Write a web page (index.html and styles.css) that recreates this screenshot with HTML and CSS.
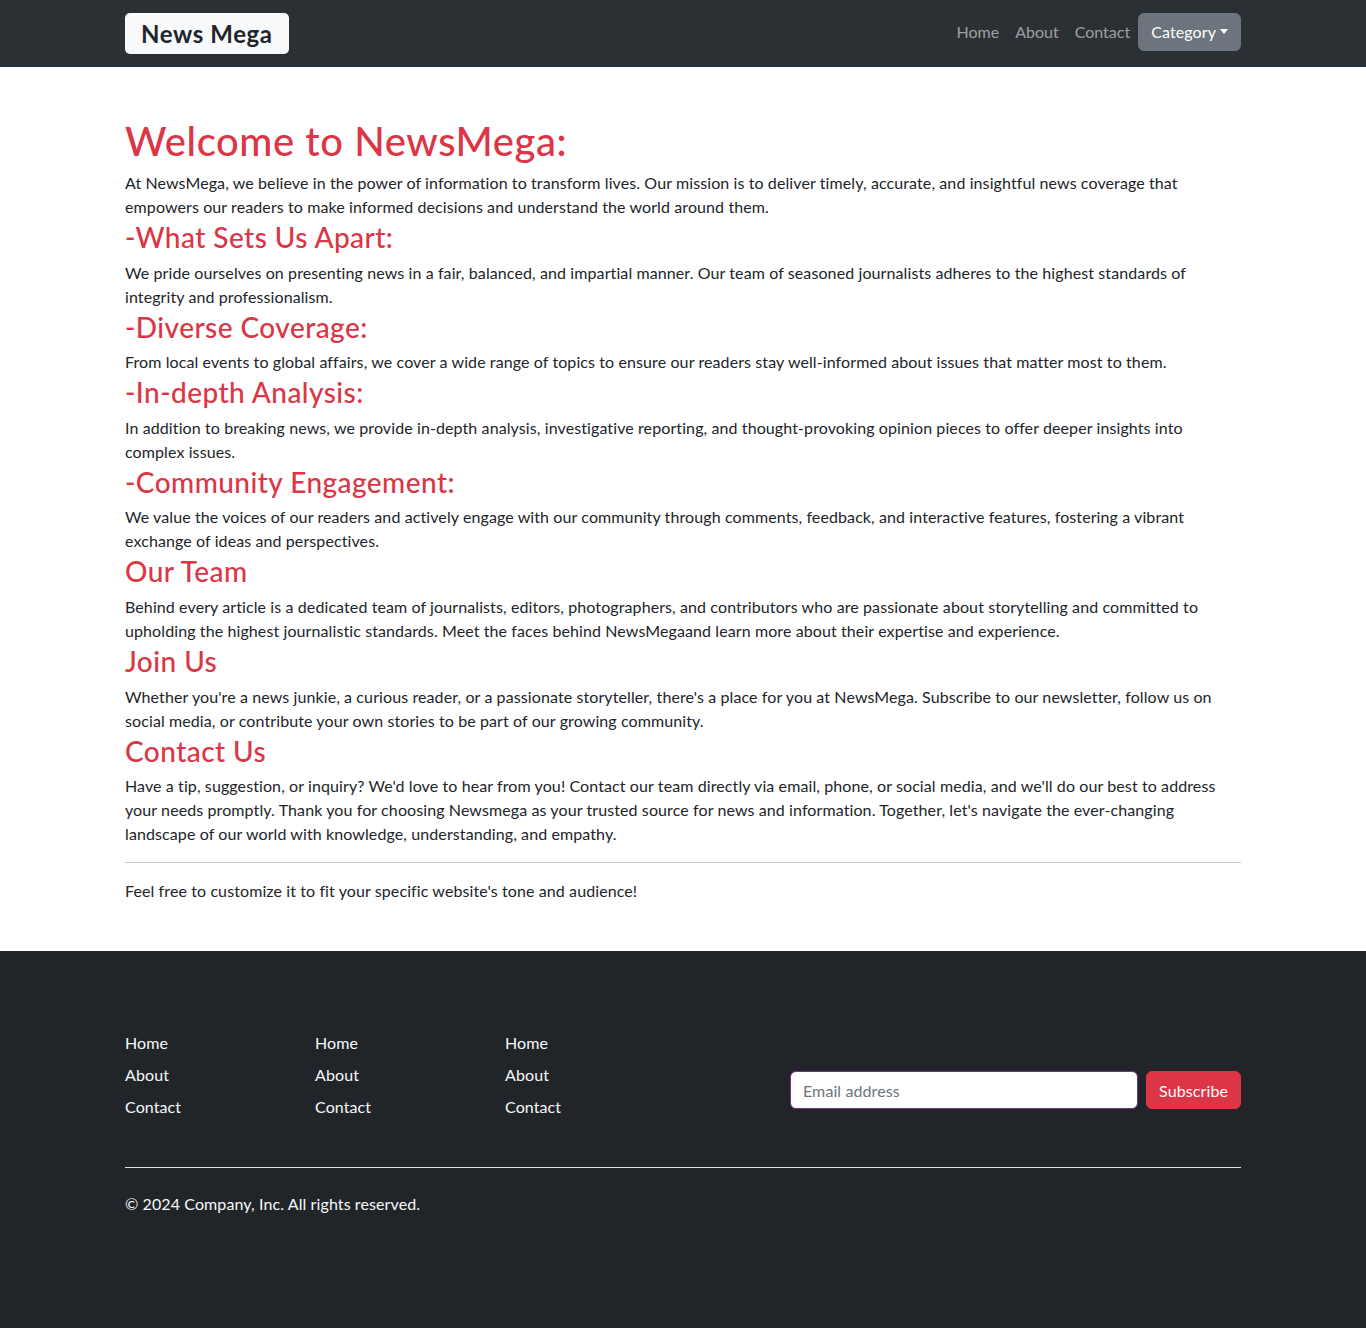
FILE: index.html
```html
<!DOCTYPE html>
<html lang="en">
<head>
<meta charset="utf-8">
<title>News Mega - About</title>
<link rel="stylesheet" href="styles.css">
</head>
<body>
<header class="navbar">
  <div class="container nav-inner">
    <a class="brand" href="#">News Mega</a>
    <ul class="nav-links">
      <li><a class="nav-link" href="#">Home</a></li>
      <li><a class="nav-link" href="#">About</a></li>
      <li><a class="nav-link" href="#">Contact</a></li>
      <li><button class="category-btn" type="button">Category<span class="caret"></span></button></li>
    </ul>
  </div>
</header>

<main class="container main">
  <h1 class="title">Welcome to NewsMega:</h1>
  <p>At NewsMega, we believe in the power of information to transform lives. Our mission is to deliver timely, accurate, and insightful news coverage that empowers our readers to make informed decisions and understand the world around them.</p>
  <h3 class="sub">-What Sets Us Apart:</h3>
  <p>We pride ourselves on presenting news in a fair, balanced, and impartial manner. Our team of seasoned journalists adheres to the highest standards of integrity and professionalism.</p>
  <h3 class="sub">-Diverse Coverage:</h3>
  <p>From local events to global affairs, we cover a wide range of topics to ensure our readers stay well-informed about issues that matter most to them.</p>
  <h3 class="sub">-In-depth Analysis:</h3>
  <p>In addition to breaking news, we provide in-depth analysis, investigative reporting, and thought-provoking opinion pieces to offer deeper insights into complex issues.</p>
  <h3 class="sub">-Community Engagement:</h3>
  <p>We value the voices of our readers and actively engage with our community through comments, feedback, and interactive features, fostering a vibrant exchange of ideas and perspectives.</p>
  <h3 class="sub">Our Team</h3>
  <p>Behind every article is a dedicated team of journalists, editors, photographers, and contributors who are passionate about storytelling and committed to upholding the highest journalistic standards. Meet the faces behind NewsMegaand learn more about their expertise and experience.</p>
  <h3 class="sub">Join Us</h3>
  <p>Whether you're a news junkie, a curious reader, or a passionate storyteller, there's a place for you at NewsMega. Subscribe to our newsletter, follow us on social media, or contribute your own stories to be part of our growing community.</p>
  <h3 class="sub">Contact Us</h3>
  <p>Have a tip, suggestion, or inquiry? We'd love to hear from you! Contact our team directly via email, phone, or social media, and we'll do our best to address your needs promptly. Thank you for choosing Newsmega as your trusted source for news and information. Together, let's navigate the ever-changing landscape of our world with knowledge, understanding, and empathy.</p>
  <hr class="divider">
  <p>Feel free to customize it to fit your specific website's tone and audience!</p>
</main>

<footer class="footer">
  <div class="container">
    <div class="footer-row">
      <ul class="footer-col">
        <li><a href="#">Home</a></li>
        <li><a href="#">About</a></li>
        <li><a href="#">Contact</a></li>
      </ul>
      <ul class="footer-col">
        <li><a href="#">Home</a></li>
        <li><a href="#">About</a></li>
        <li><a href="#">Contact</a></li>
      </ul>
      <ul class="footer-col">
        <li><a href="#">Home</a></li>
        <li><a href="#">About</a></li>
        <li><a href="#">Contact</a></li>
      </ul>
      <form class="subscribe">
        <input class="email" type="text" placeholder="Email address">
        <button class="subscribe-btn" type="button">Subscribe</button>
      </form>
    </div>
    <div class="copyright">
      <p>© 2024 Company, Inc. All rights reserved.</p>
    </div>
  </div>
</footer>
</body>
</html>
```

FILE: styles.css
```css
* { box-sizing: border-box; }
html, body { margin: 0; padding: 0; }
body {
  font-family: "Lato", "Liberation Sans", sans-serif;
  font-size: 16px;
  line-height: 24px;
  letter-spacing: 0.1px;
  color: #212529;
  background: #fff;
}
a { text-decoration: none; }
ul { list-style: none; margin: 0; padding: 0; }

.container {
  width: 1116px;
  margin: 0 auto;
}

/* Navbar */
.navbar {
  background: #2b3035;
  height: 67px;
}
.nav-inner {
  height: 67px;
  display: flex;
  align-items: center;
  justify-content: space-between;
}
.brand {
  display: inline-block;
  background: #f8f9fa;
  color: #212529;
  font-weight: 700;
  font-size: 24px;
  letter-spacing: 0.6px;
  line-height: 42px;
  height: 41px;
  padding: 0 16px;
  border-radius: 5px;
}
.nav-links {
  display: flex;
  align-items: center;
  margin-top: -3px;
}
.nav-link {
  display: block;
  padding: 8px 8px;
  letter-spacing: 0;
  color: rgba(255, 255, 255, 0.55);
}
.category-btn {
  font-family: inherit;
  font-size: 16px;
  letter-spacing: 0.1px;
  line-height: 24px;
  color: #fff;
  background: #6c757d;
  border: 1px solid #6c757d;
  border-radius: 6px;
  padding: 6px 12px;
  height: 38px;
  display: flex;
  align-items: center;
}
.caret {
  display: inline-block;
  margin-left: 4px;
  width: 0;
  height: 0;
  border-top: 5px solid #fff;
  border-left: 4px solid transparent;
  border-right: 4px solid transparent;
  margin-top: -2px;
}

/* Main */
.main {
  padding: 48px 0;
}
.main p { margin: 0; }
.title {
  margin: 0 0 6px;
  padding-top: 2px;
  font-size: 40px;
  line-height: 48px;
  font-weight: 500;
  letter-spacing: 0.55px;
  color: #dc3545;
}
.sub {
  margin: 0 0 6px;
  padding-top: 2px;
  font-size: 28px;
  line-height: 33.6px;
  font-weight: 500;
  letter-spacing: 0.45px;
  color: #dc3545;
}
.divider {
  margin: 16px 0;
  border: 0;
  border-top: 1px solid #c8c9ca;
}

/* Footer */
.footer {
  background: #212529;
  color: #f8f9fa;
  padding: 80px 0 88px;
}
.footer-row {
  display: flex;
}
.footer-col {
  width: 190px;
  padding-bottom: 16px;
}
.footer-col li { margin-bottom: 8px; }
.footer-col a { color: #f8f9fa; }
.subscribe {
  margin-left: 95px;
  width: 451px;
  display: flex;
  gap: 8px;
  padding-top: 40px;
  align-self: flex-start;
}
.email {
  flex: 1;
  height: 38px;
  font-family: inherit;
  font-size: 16px;
  letter-spacing: 0.1px;
  padding: 6px 12px;
  border: 1px solid #7a2e86;
  border-radius: 6px;
  background: #fff;
  color: #212529;
}
.email::placeholder { color: #6c757d; }
.subscribe-btn {
  height: 38px;
  font-family: inherit;
  font-size: 16px;
  letter-spacing: 0.1px;
  color: #fff;
  background: #dc3545;
  border: 1px solid #dc3545;
  border-radius: 6px;
  padding: 6px 12px;
}
.copyright {
  margin-top: 24px;
  border-top: 1px solid #dee2e6;
  padding: 24px 0;
}
.copyright p { margin: 0; }
```
